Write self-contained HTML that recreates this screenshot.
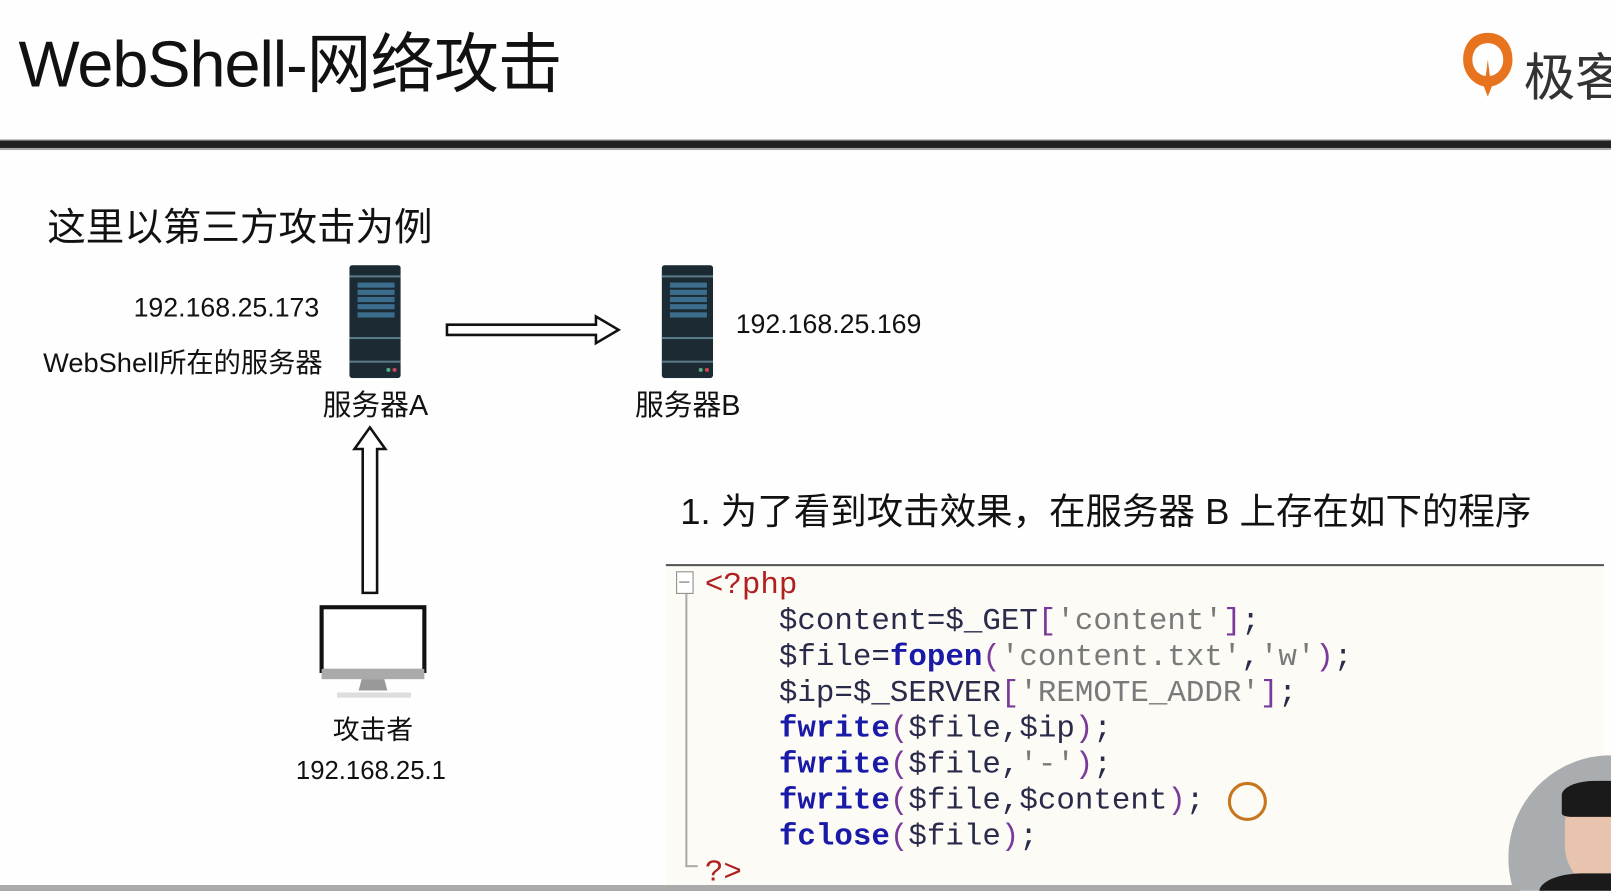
<!DOCTYPE html>
<html style="width:1611px;height:891px;overflow:hidden"><head><meta charset="utf-8"><style>
body{margin:0;width:1611px;height:891px;background:#fefefe;position:relative;overflow:hidden;font-family:"Liberation Sans","Noto Sans CJK SC",sans-serif;color:#111}
#w{position:absolute;left:0;top:0;width:1568px;height:867px;transform:scale(1.0275);transform-origin:0 0;overflow:hidden}
.a{position:absolute;white-space:nowrap}
.code{font-family:"Liberation Mono",monospace;font-size:30px;color:#2a2a4a}
.k{color:#1a1aa8;font-weight:bold}.s{color:#7a7a7a}.p{color:#7a3a9a}.r{color:#b02020}
</style></head><body>
<div id="w">
<div class="a" style="left:18px;top:12px;font-size:63px;letter-spacing:-1px">WebShell-网络攻击</div>
<svg class="a" style="left:1420px;top:30px" width="56" height="66" viewBox="0 0 56 66"><path d="M28 2C12 2 4 14 4 28c0 14 10 24 20 26l4 10 4-10c10-2 20-12 20-26C52 14 44 2 28 2z" fill="#e8731e"/><path d="M28 12c-9 0-15 7-15 16s6 15 13 16l2-16 2 16c7-1 13-7 13-16s-6-16-15-16z" fill="#fff"/></svg>
<div class="a" style="left:1483px;top:36px;font-size:50px;color:#333">极客</div>
<div class="a" style="left:0;top:136px;width:1611px;height:7px;background:#222;border-top:1px solid #888;border-bottom:2px solid #aaa"></div>
<div class="a" style="left:46px;top:190px;font-size:37.5px">这里以第三方攻击为例</div>
<div class="a" style="left:130px;top:284px;font-size:26px">192.168.25.173</div>
<div class="a" style="left:42px;top:331px;font-size:26.5px">WebShell所在的服务器</div>
<div class="a" style="left:716px;top:300px;font-size:26px">192.168.25.169</div>
<div class="a" style="left:314px;top:373px;font-size:28px">服务器A</div>
<div class="a" style="left:618px;top:373px;font-size:28px">服务器B</div>
<svg class="a" style="left:340px;top:258px" width="50" height="110" viewBox="0 0 50 110"><rect width="50" height="110" rx="3" fill="#1c2a33"/><rect y="10" width="50" height="2" fill="#5a7a88"/><g fill="#3d6d8e"><rect x="8" y="17" width="36" height="5"/><rect x="8" y="24" width="36" height="5"/><rect x="8" y="31" width="36" height="5"/><rect x="8" y="38" width="36" height="5"/><rect x="8" y="46" width="36" height="5"/></g><rect y="70" width="50" height="2" fill="#5a7a88"/><rect y="93" width="50" height="2" fill="#5a7a88"/><circle cx="38" cy="102" r="2" fill="#5a8"/><circle cx="44" cy="102" r="2" fill="#c45"/></svg>
<svg class="a" style="left:644px;top:258px" width="50" height="110" viewBox="0 0 50 110"><rect width="50" height="110" rx="3" fill="#1c2a33"/><rect y="10" width="50" height="2" fill="#5a7a88"/><g fill="#3d6d8e"><rect x="8" y="17" width="36" height="5"/><rect x="8" y="24" width="36" height="5"/><rect x="8" y="31" width="36" height="5"/><rect x="8" y="38" width="36" height="5"/><rect x="8" y="46" width="36" height="5"/></g><rect y="70" width="50" height="2" fill="#5a7a88"/><rect y="93" width="50" height="2" fill="#5a7a88"/><circle cx="38" cy="102" r="2" fill="#5a8"/><circle cx="44" cy="102" r="2" fill="#c45"/></svg>
<svg class="a" style="left:430px;top:302px" width="180" height="40"><path d="M5 14H150V6L172 19 150 32V24H5Z" fill="#fff" stroke="#111" stroke-width="2.5"/></svg>
<svg class="a" style="left:340px;top:412px" width="40" height="168"><path d="M13 165V25H5L20 4 35 25H27V165Z" fill="#fff" stroke="#111" stroke-width="2.5"/></svg>
<svg class="a" style="left:310px;top:588px" width="110" height="96"><rect x="3" y="3" width="100" height="62" fill="#fff" stroke="#111" stroke-width="4"/><rect x="3" y="63" width="100" height="10" fill="#aaa"/><path d="M42 73h22l3 11H39z" fill="#999"/><rect x="18" y="86" width="72" height="5" fill="#ddd"/></svg>
<div class="a" style="left:324px;top:690px;font-size:26px">攻击者</div>
<div class="a" style="left:288px;top:736px;font-size:25px">192.168.25.1</div>
<div class="a" style="left:662px;top:470px;font-size:35.5px">1. 为了看到攻击效果，在服务器 B 上存在如下的程序</div>
<div class="a" style="left:648px;top:549px;width:913px;height:318px;background:#fcfbf6;border-top:2px solid #555"></div>
<div class="a" style="left:658px;top:556px;width:15px;height:20px;border:1px solid #888;background:#fff"></div>
<div class="a" style="left:661px;top:566px;width:10px;height:1px;background:#666"></div>
<div class="a" style="left:667px;top:578px;width:2px;height:265px;background:#aaa"></div>
<div class="a" style="left:667px;top:842px;width:12px;height:2px;background:#aaa"></div>
<div class="a code" style="left:686px;top:553px;line-height:35px">
<div><span class="r">&lt;?php</span></div>
<div style="padding-left:72px">$content=$_GET<span class="p">[</span><span class="s">'content'</span><span class="p">]</span>;</div>
<div style="padding-left:72px">$file=<span class="k">fopen</span><span class="p">(</span><span class="s">'content.txt'</span>,<span class="s">'w'</span><span class="p">)</span>;</div>
<div style="padding-left:72px">$ip=$_SERVER<span class="p">[</span><span class="s">'REMOTE_ADDR'</span><span class="p">]</span>;</div>
<div style="padding-left:72px"><span class="k">fwrite</span><span class="p">(</span>$file,$ip<span class="p">)</span>;</div>
<div style="padding-left:72px"><span class="k">fwrite</span><span class="p">(</span>$file,<span class="s">'-'</span><span class="p">)</span>;</div>
<div style="padding-left:72px"><span class="k">fwrite</span><span class="p">(</span>$file,$content<span class="p">)</span>;</div>
<div style="padding-left:72px"><span class="k">fclose</span><span class="p">(</span>$file<span class="p">)</span>;</div>
<div><span class="r">?&gt;</span></div>
</div>
<div class="a" style="left:1195px;top:761px;width:32px;height:32px;border:3px solid #c8761e;border-radius:50%"></div>
<div class="a" style="left:1468px;top:735px;width:100px;height:132px;overflow:hidden">
<div style="position:absolute;left:0;top:0;width:200px;height:200px;border-radius:50%;background:#a9adaf;overflow:hidden">
<div style="position:absolute;left:55px;top:30px;width:70px;height:95px;border-radius:40%;background:#e8c4ae"></div>
<div style="position:absolute;left:52px;top:25px;width:80px;height:35px;border-radius:40% 40% 10% 10%;background:#1a1a1a"></div>
<div style="position:absolute;left:30px;top:115px;width:140px;height:60px;background:#1a1a1a;border-radius:30% 30% 0 0"></div>
</div></div>
</div>
<div class="a" style="left:0;top:885px;width:1520px;height:6px;background:#aaa"></div>
</body></html>
